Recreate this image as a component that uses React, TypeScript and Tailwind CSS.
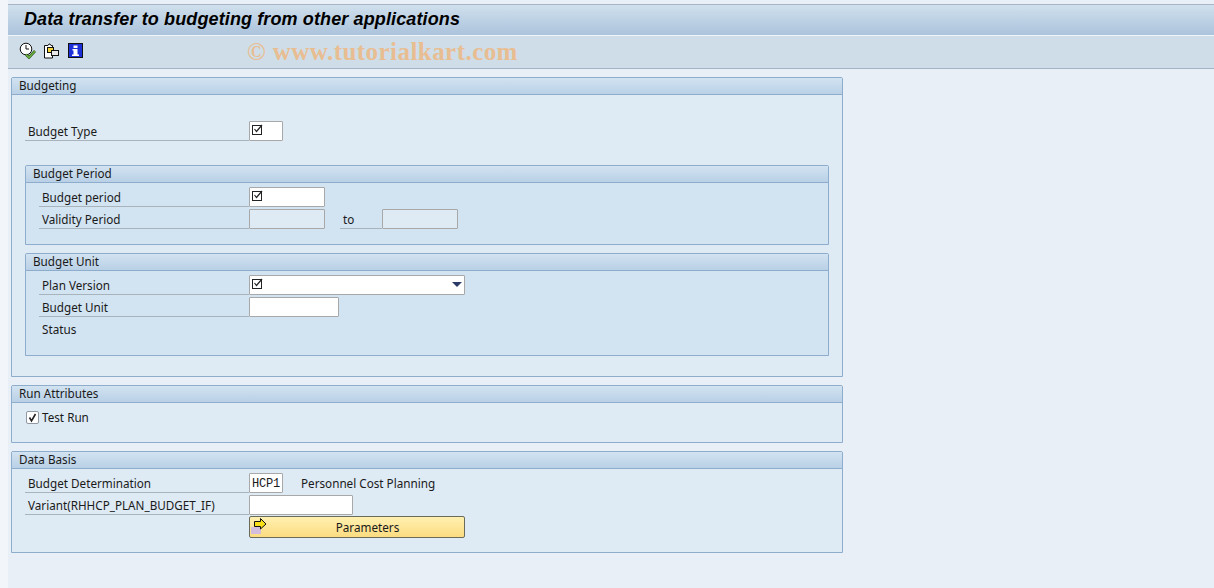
import type { ReactNode } from "react";

const sans = "font-['Noto_Sans',sans-serif] text-[11.7px] text-[#1a1a1a]";

function RequiredMark() {
  return (
    <svg width="12" height="12" viewBox="0 0 12 12" className="ml-[2px] mt-[2px]" fill="none">
      <rect x="0.5" y="1.5" width="9" height="9" stroke="#222" />
      <path d="M2.5 5 L4.5 7.5 L10 1" stroke="#222" strokeWidth="1.2" />
    </svg>
  );
}

function Field({ w, checked, disabled, children }: { w: string; checked?: boolean; disabled?: boolean; children?: ReactNode }) {
  return (
    <div
      className={`${w} relative flex h-5 shrink-0 items-start rounded-[1px] border border-[#a8a8a8] ${disabled ? "bg-[#deeaf4]" : "bg-white"}`}
    >
      {checked && <RequiredMark />}
      {children}
    </div>
  );
}

function Label({ w, children }: { w: string; children: ReactNode }) {
  return (
    <div className={`${w} flex h-5 shrink-0 items-end border-b border-[#a9b3bb] pl-[3px] leading-[17px]`}>
      <span className="whitespace-nowrap">{children}</span>
    </div>
  );
}

function Row({ className, children }: { className?: string; children: ReactNode }) {
  return <div className={`flex h-[22px] items-start ${className ?? ""}`}>{children}</div>;
}

function Group({ title, className, inner, children }: { title: string; className: string; inner?: boolean; children: ReactNode }) {
  return (
    <section className={`${className} rounded-t-[2px] border border-[#8eaccb] ${inner ? "bg-[#d2e3f1]" : "bg-[#deeaf4]"}`}>
      <div className="flex h-[17px] items-center border-b border-[#8eaccb] bg-gradient-to-b from-[#d2e3f1] to-[#b9d0e6] pl-[7px] leading-none">
        {title}
      </div>
      {children}
    </section>
  );
}

export default function App() {
  return (
    <div className={`${sans} flex h-[588px] w-[1214px] overflow-hidden bg-[#f2f5f9]`}>
      <div className="w-[8px] shrink-0" />
      <main className="flex min-w-0 flex-1 flex-col bg-[#e8eff7]">
        <div className="mt-[4px] h-px bg-[#a9b5c6]" />
        <header className="flex h-[31px] items-center border-b border-b-[#f0f5fa] bg-gradient-to-b from-[#d0e0ed] to-[#abc3dc] pb-[3px] pl-[16px]">
          <h1 className="font-['Liberation_Sans',sans-serif] text-[18px] font-bold italic leading-none tracking-[0.12px] text-black">
            Data transfer to budgeting from other applications
          </h1>
        </header>
        <div className="relative flex h-[33px] items-center gap-[7px] border-b border-[#a3b4c9] bg-[#cfdde8] pb-[3px] pl-[11px]">
          <svg width="17" height="17" viewBox="0 0 17 17" fill="none">
            <circle cx="7" cy="7" r="5.8" fill="#fff" stroke="#111" />
            <path d="M7 3 V7 H10" stroke="#111" />
            <path d="M7 12.5 L10 15.5 L16 9" stroke="#27481a" strokeWidth="2.6" />
            <path d="M7 12.5 L10 15.5 L16 9" stroke="#6db33f" strokeWidth="1.6" />
          </svg>
          <svg width="16" height="16" viewBox="0 0 16 16" fill="none">
            <path d="M1.5 2.5 H5 L6 1 H7 L8 2.5 H9.5 V15 H1.5 Z" fill="#fff" stroke="#111" />
            <rect x="4.5" y="4.5" width="6" height="5" fill="#f4d53c" stroke="#111" />
            <rect x="8.5" y="7.5" width="7" height="5" fill="#e8e8e8" stroke="#111" />
          </svg>
          <svg width="15" height="15" viewBox="0 0 15 15" className="ml-[2px]">
            <rect width="15" height="15" fill="#111" />
            <rect x="1" y="1" width="13" height="13" fill="#1c2fd8" />
            <path d="M5.5 2.5 H9.5 V5 H5.5 Z M4.5 6 H9.5 V11.5 H11 V13 H4 V11.5 H5.5 V7.5 H4.5 Z" fill="#fff" />
          </svg>
          <span className="absolute left-[239px] top-[3px] font-['Liberation_Serif',serif] text-[25px] font-bold leading-[26px] tracking-[0.45px] text-[#e8bd92]">
            © www.tutorialkart.com
          </span>
        </div>

        <div className="flex w-[835px] flex-col gap-[8px] pl-[3px] pt-[8px]">
          <Group title="Budgeting" className="h-[300px]">
            <Row className="ml-[13px] mt-[26px]">
              <Label w="w-[224px]">Budget Type</Label>
              <Field w="w-[34px]" checked />
            </Row>
            <div className="ml-[13px] mr-[13px] mt-[22px] flex flex-col gap-[8px]">
              <Group title="Budget Period" className="h-[80px]" inner>
                <div className="ml-[13px] mt-[4px]">
                  <Row>
                    <Label w="w-[210px]">Budget period</Label>
                    <Field w="w-[76px]" checked />
                  </Row>
                  <Row>
                    <Label w="w-[210px]">Validity Period</Label>
                    <Field w="w-[76px]" disabled />
                    <div className="ml-[15px]">
                      <Label w="w-[42px]">to</Label>
                    </div>
                    <Field w="w-[76px]" disabled />
                  </Row>
                </div>
              </Group>
              <Group title="Budget Unit" className="h-[103px]" inner>
                <div className="ml-[13px] mt-[4px]">
                  <Row>
                    <Label w="w-[210px]">Plan Version</Label>
                    <Field w="w-[216px]" checked>
                      <span className="absolute right-[2px] top-[6px] h-0 w-0 border-x-[5px] border-t-[5px] border-x-transparent border-t-[#2b3a67]" />
                    </Field>
                  </Row>
                  <Row>
                    <Label w="w-[210px]">Budget Unit</Label>
                    <Field w="w-[90px]" />
                  </Row>
                  <Row className="pl-[3px] leading-[20px]">Status</Row>
                </div>
              </Group>
            </div>
          </Group>

          <Group title="Run Attributes" className="h-[58px]">
            <div className="ml-[14px] mt-[5px] flex h-5 items-center gap-[3px]">
              <svg width="13" height="13" viewBox="0 0 13 13" fill="none" className="-mt-[2px]">
                <rect x="0.5" y="0.5" width="12" height="12" rx="1.5" fill="#fff" stroke="#8f98a3" />
                <path d="M3.5 6.5 L5.5 10 L9.5 3" stroke="#222" strokeWidth="1.6" />
              </svg>
              <span>Test Run</span>
            </div>
          </Group>

          <Group title="Data Basis" className="h-[102px]">
            <div className="ml-[13px] mt-[4px]">
              <Row>
                <Label w="w-[224px]">Budget Determination</Label>
                <Field w="w-[34px]">
                  <span className="pl-[2px] font-['Liberation_Mono',monospace] text-[12px] leading-[20px] tracking-[-0.2px]">HCP1</span>
                </Field>
                <span className="ml-[18px] leading-[20px]">Personnel Cost Planning</span>
              </Row>
              <Row>
                <Label w="w-[224px]">Variant(RHHCP_PLAN_BUDGET_IF)</Label>
                <Field w="w-[104px]" />
              </Row>
              <div className="ml-[224px] -mt-px">
                <button className="relative flex h-[22px] w-[216px] items-center justify-center rounded-[2px] border border-[#6b6b5c] bg-gradient-to-b from-[#fff0b0] to-[#fbdc80] pl-[21px] pt-[1px] leading-none">
                  <span className="absolute left-[1px] top-[10px] h-[7px] w-[10px] bg-[#d3bedd]" />
                  <svg width="13" height="12" viewBox="0 0 13 12" className="absolute left-[4px] top-[1px]">
                    <path d="M0.5 3.5 H6.5 V0.5 L12 6 L6.5 11 V8.5 H0.5 Z" fill="#f7e017" stroke="#111" />
                  </svg>
                  Parameters
                </button>
              </div>
            </div>
          </Group>
        </div>
      </main>
    </div>
  );
}
